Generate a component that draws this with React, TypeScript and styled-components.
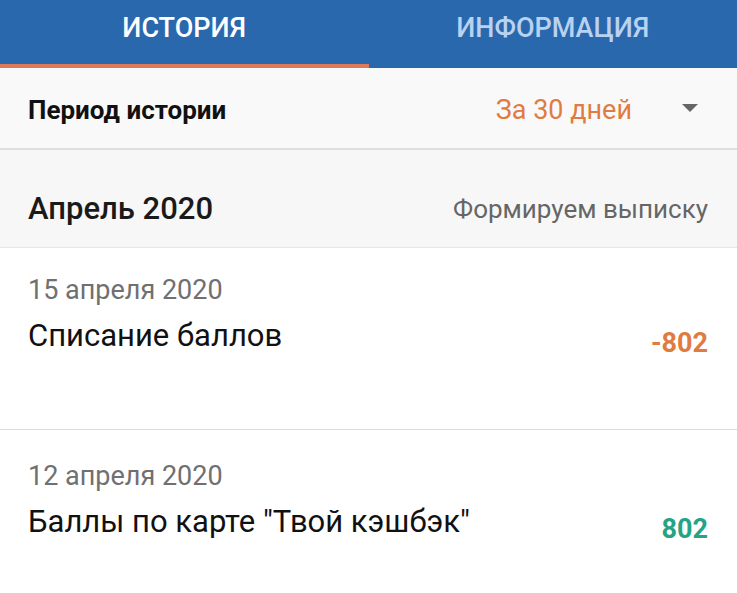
import React from "react";
import styled, { createGlobalStyle } from "styled-components";

const GlobalStyle = createGlobalStyle`
  html, body {
    margin: 0;
    padding: 0;
    background: #ffffff;
    font-family: Roboto, "Noto Sans", sans-serif;
  }
`;

const Screen = styled.div`
  width: 737px;
  height: 593px;
  overflow: hidden;
  background: #ffffff;
`;

const Tabs = styled.div`
  display: flex;
  height: 68px;
  background: #2a68ae;
`;

const Tab = styled.div<{ $active?: boolean }>`
  flex: 1;
  display: flex;
  align-items: center;
  justify-content: center;
  padding-bottom: 8px;
  box-sizing: border-box;
  font-size: 27px;
  font-weight: 500;
  color: ${(p) => (p.$active ? "#ffffff" : "#b9d2f0")};
  border-bottom: 4px solid ${(p) => (p.$active ? "#dd7a5c" : "transparent")};
`;

const FilterRow = styled.div`
  display: flex;
  align-items: center;
  height: 82px;
  padding: 4px 39px 0 28px;
  box-sizing: border-box;
  background: #f9f9f9;
  border-bottom: 2px solid #dedede;
`;

const FilterLabel = styled.div`
  flex: 1;
  font-size: 26px;
  font-weight: 700;
  color: #111111;
`;

const FilterValue = styled.div`
  font-size: 27px;
  color: #e07c42;
  margin-right: 50px;
`;

const Caret = styled.div`
  width: 0;
  height: 0;
  margin-top: -4px;
  border-left: 8px solid transparent;
  border-right: 8px solid transparent;
  border-top: 8px solid #666666;
`;

const MonthRow = styled.div`
  display: flex;
  align-items: center;
  justify-content: space-between;
  height: 98px;
  box-sizing: border-box;
  padding: 20px 29px 0 28px;
  background: #f7f7f7;
  border-bottom: 1px solid #e6e6e6;
`;

const MonthTitle = styled.div`
  font-size: 31px;
  font-weight: 500;
  color: #1a1a1a;
`;

const MonthStatus = styled.div`
  font-size: 26px;
  color: #666666;
`;

const Item = styled.div<{ $height: number; $padTop: number }>`
  display: flex;
  flex-direction: column;
  height: ${(p) => p.$height}px;
  padding: ${(p) => p.$padTop}px 29px 0 28px;
  box-sizing: border-box;
  background: #ffffff;
  border-bottom: 1px solid #dcdcdc;
  box-shadow: 0 2px 2px rgba(0, 0, 0, 0.08);
`;

const ItemDate = styled.div`
  font-size: 27px;
  line-height: 32px;
  color: #707070;
`;

const ItemBody = styled.div`
  display: flex;
  align-items: flex-start;
  justify-content: space-between;
  margin-top: 12px;
`;

const ItemTitle = styled.div`
  font-size: 31px;
  line-height: 36px;
  color: #111111;
`;

const Amount = styled.div<{ $positive?: boolean }>`
  margin-top: 9px;
  font-size: 27px;
  line-height: 32px;
  font-weight: 700;
  color: ${(p) => (p.$positive ? "#24a387" : "#e07c42")};
`;

const items = [
  { date: "15 апреля 2020", title: "Списание баллов", amount: "-802", positive: false, height: 182, padTop: 26 },
  { date: "12 апреля 2020", title: 'Баллы по карте "Твой кэшбэк"', amount: "802", positive: true, height: 200, padTop: 30 },
];

export default function App() {
  return (
    <Screen>
      <GlobalStyle />
      <Tabs>
        <Tab $active>ИСТОРИЯ</Tab>
        <Tab>ИНФОРМАЦИЯ</Tab>
      </Tabs>
      <FilterRow>
        <FilterLabel>Период истории</FilterLabel>
        <FilterValue>За 30 дней</FilterValue>
        <Caret />
      </FilterRow>
      <MonthRow>
        <MonthTitle>Апрель 2020</MonthTitle>
        <MonthStatus>Формируем выписку</MonthStatus>
      </MonthRow>
      {items.map((it) => (
        <Item key={it.date} $height={it.height} $padTop={it.padTop}>
          <ItemDate>{it.date}</ItemDate>
          <ItemBody>
            <ItemTitle>{it.title}</ItemTitle>
            <Amount $positive={it.positive}>{it.amount}</Amount>
          </ItemBody>
        </Item>
      ))}
    </Screen>
  );
}
